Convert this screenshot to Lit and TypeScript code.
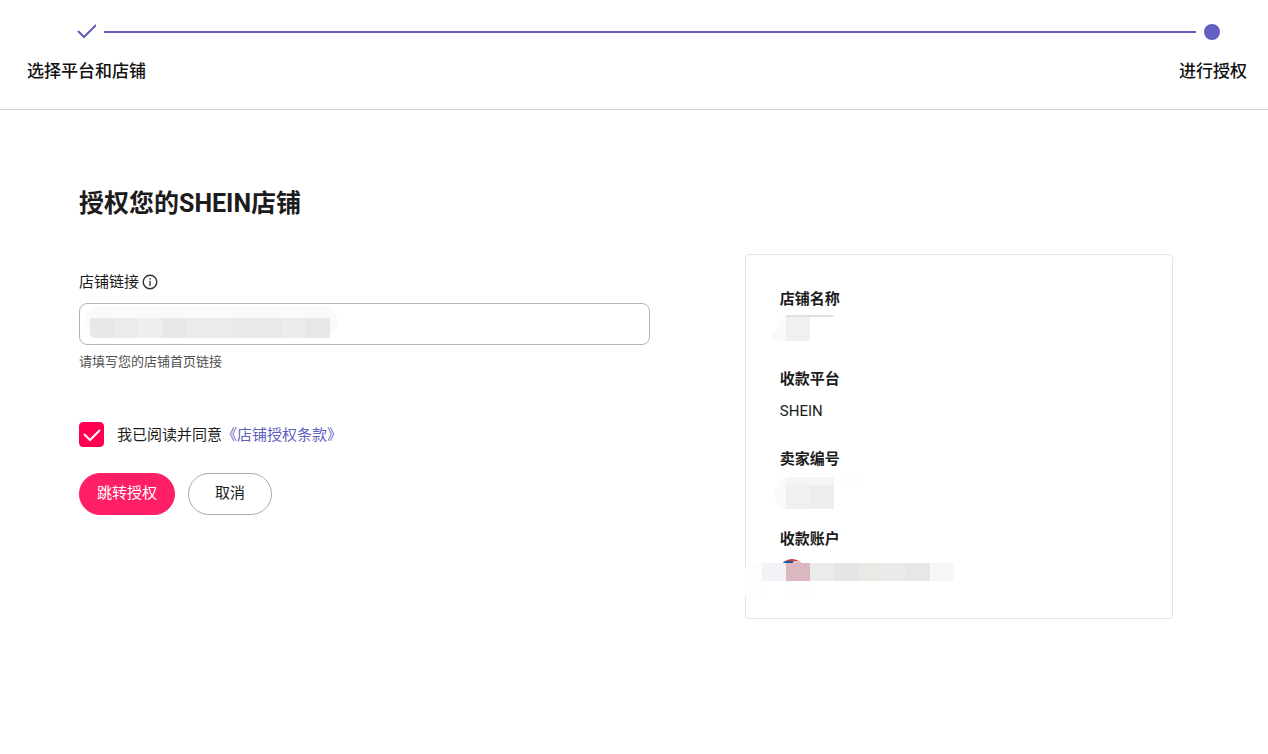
import { LitElement, html, svg, css, nothing } from "lit";
import { customElement, state } from "lit/decorators.js";

interface Block {
  x: number;
  y: number;
  w: number;
  h: number;
  fill: string;
}

const block = (x: number, y: number, w: number, h: number, fill: string): Block => ({ x, y, w, h, fill });
const rects = (blocks: Block[]) =>
  blocks.map((b) => svg`<rect x=${b.x} y=${b.y} width=${b.w} height=${b.h} fill=${b.fill}></rect>`);

const shopLinkMask = svg`
  <rect x="5" y="3" width="254" height="32" rx="16" fill="#fafafa"></rect>
  <clipPath id="link-clip"><path d="M11 0H251V35H19Q11 35 11 31Z"></path></clipPath>
  <g clip-path="url(#link-clip)">
    ${rects([
      block(11, 15, 24, 20, "#e9e8e7"),
      block(35, 15, 24, 20, "#ebebeb"),
      block(59, 15, 24, 20, "#eeeeee"),
      block(83, 15, 24, 20, "#e7e7e7"),
      block(107, 15, 48, 20, "#ebebeb"),
      block(155, 15, 48, 20, "#e9e9e9"),
      block(203, 15, 24, 20, "#ececec"),
      block(227, 15, 24, 20, "#e7e7e7"),
    ])}
  </g>`;

const shopNameMask = svg`
  <path d="M20 -3Q7 0 6 12Q2 13 2 17Q2 21 7 21H12V22H30V-3Z" fill="#fafafa"></path>
  <rect x="16" y="-2" width="24" height="24" fill="#f0f0f0"></rect>
  <path d="M15 -2Q16 -4 18 -4H62Q64 -4 64 -2Z" fill="#dfe0df"></path>`;

const sellerMask = svg`
  <path d="M20 -2Q5 -1 5 14Q5 29 16 30H20Z" fill="#fafafa"></path>
  ${rects([
    block(16, -2, 48, 8, "#f5f5f5"),
    block(64, -2, 24, 8, "#fdfdfd"),
    block(16, 6, 24, 24, "#f0f0f0"),
    block(40, 6, 24, 24, "#ededed"),
  ])}`;

const accountMask = svg`
  <path d="M-26 14Q-25 4 -8 4V41Q-26 41 -26 33Z" fill="#fdfdfd"></path>
  <clipPath id="flag-clip"><circle cx="22" cy="12" r="12"></circle></clipPath>
  <g clip-path="url(#flag-clip)">
    <rect x="10" y="0" width="24" height="4" fill="#d23a43"></rect>
    <rect x="10" y="2" width="13" height="3" fill="#1b57a5"></rect>
    <rect x="23" y="2" width="12" height="3" fill="#efb9bd"></rect>
  </g>
  ${rects([
    block(-8, 4, 24, 18, "#f4f2f7"),
    block(16, 4, 24, 18, "#dbb7bf"),
    block(40, 4, 24, 18, "#ebebeb"),
    block(64, 4, 24, 18, "#e5e5e5"),
    block(88, 4, 24, 18, "#e9e9e6"),
    block(112, 4, 24, 18, "#e9ebea"),
    block(136, 4, 24, 18, "#e7e7e7"),
    block(160, 4, 24, 18, "#f7f7f7"),
    block(16, 22, 24, 19, "#fdfdfd"),
  ])}`;

@customElement("app-root")
export class AppRoot extends LitElement {
  @state() private agreed = true;

  static styles = css`
    :host {
      display: block;
      min-height: 100vh;
      background: #fff;
      color: #1c1c1c;
      font: 15px/24px Roboto, "Noto Sans CJK SC", sans-serif;
    }
    * { box-sizing: border-box; }
    .steps {
      padding: 20px 21px 24px 27px;
      border-bottom: 1px solid #d0d0d0;
    }
    .track {
      display: flex;
      align-items: center;
      gap: 8px;
      height: 24px;
      padding: 0 27px 0 49px;
    }
    .track svg { display: block; flex: none; }
    .line { flex: 1; height: 2px; background: #625fc1; }
    .dot { width: 16px; height: 16px; border-radius: 50%; background: #625fc1; }
    .names {
      display: flex;
      justify-content: space-between;
      margin: 14px 0 0;
      padding: 0;
      list-style: none;
      font-size: 17px;
      line-height: 27px;
      font-weight: 500;
      color: #111;
    }
    .content { padding: 76px 95px 40px 79px; }
    h1 {
      margin: 0;
      font-size: 25px;
      line-height: 36px;
      font-weight: 700;
    }
    .columns {
      display: grid;
      grid-template-columns: minmax(0, 4fr) minmax(0, 3fr);
      column-gap: 95px;
      align-items: start;
      margin-top: 32px;
    }
    .form { padding-top: 16px; }
    .label { display: flex; align-items: center; gap: 3px; }
    .label svg { display: block; }
    .field { position: relative; margin-top: 9px; }
    .field input {
      display: block;
      width: 100%;
      height: 42px;
      padding: 0 16px;
      border: 1px solid #b5b5b5;
      border-radius: 8px;
      background: #fff;
      font: inherit;
      color: inherit;
    }
    .mask {
      position: absolute;
      left: 0;
      top: 0;
      overflow: visible;
      pointer-events: none;
    }
    .hint {
      margin: 7px 0 0;
      font-size: 13px;
      line-height: 20px;
      color: #505050;
    }
    .agree {
      display: flex;
      align-items: center;
      margin-top: 50px;
    }
    .box { position: relative; width: 25px; height: 25px; margin-right: 13px; }
    .box input {
      display: block;
      appearance: none;
      width: 25px;
      height: 25px;
      margin: 0;
      border: 1px solid #ff0050;
      border-radius: 4px;
    }
    .box input:checked { background: #ff0050; }
    a { color: #625fc1; text-decoration: none; }
    .actions { display: flex; gap: 13px; margin-top: 26px; }
    button {
      height: 42px;
      padding: 0 17px 2px;
      border: 1px solid #ff1f66;
      border-radius: 21px;
      background: #ff1f66;
      color: #fff;
      font: inherit;
    }
    .plain {
      padding: 0 26px 2px;
      border-color: #ababab;
      background: #fff;
      color: #1c1c1c;
    }
    .card {
      display: grid;
      row-gap: 24px;
      margin: 0;
      padding: 32px 34px 35px;
      border: 1px solid #e4e4e4;
      border-radius: 4px;
    }
    dt { font-weight: 700; }
    dd { position: relative; min-height: 24px; margin: 8px 0 0; }
    .card .mask { left: -8px; }
  `;

  private item(name: string, value: unknown) {
    return html`<div><dt>${name}</dt><dd>${value}</dd></div>`;
  }

  private mask(shape: unknown) {
    return html`<svg class="mask" width="200" height="42" viewBox="2 0 200 42" aria-hidden="true">${shape}</svg>`;
  }

  render() {
    return html`
      <header class="steps">
        <div class="track">
          <svg width="20" height="16" viewBox="0 0 20 16" fill="none" stroke="#625fc1" stroke-width="2">
            <path d="M2 7L8 13L20 1"></path>
          </svg>
          <span class="line"></span>
          <span class="dot"></span>
        </div>
        <ol class="names">
          <li>选择平台和店铺</li>
          <li aria-current="step">进行授权</li>
        </ol>
      </header>
      <main class="content">
        <h1>授权您的SHEIN店铺</h1>
        <div class="columns">
          <form class="form" @submit=${(e: Event) => e.preventDefault()}>
            <label class="label" for="shop-link">
              店铺链接
              <svg width="16" height="16" viewBox="0 0 16 16" fill="none" stroke="#333">
                <circle cx="8" cy="8" r="6.8" stroke-width="1.4"></circle>
                <path d="M8 6.8V12M8 4V5.5" stroke-width="1.3"></path>
              </svg>
            </label>
            <div class="field">
              <input id="shop-link" type="text" aria-describedby="link-hint" />
              <svg class="mask" width="260" height="42" viewBox="0 0 260 42" aria-hidden="true">${shopLinkMask}</svg>
            </div>
            <p class="hint" id="link-hint">请填写您的店铺首页链接</p>
            <div class="agree">
              <span class="box">
                <input
                  id="agree"
                  type="checkbox"
                  .checked=${this.agreed}
                  @change=${(e: Event) => (this.agreed = (e.target as HTMLInputElement).checked)}
                />
                ${this.agreed
                  ? html`<svg class="mask" width="25" height="25" viewBox="0 0 25 25" fill="none" stroke="#fff" stroke-width="2">
                      <path d="M5 12L11 18L21 8"></path>
                    </svg>`
                  : nothing}
              </span>
              <label for="agree">我已阅读并同意</label><a href="#terms">《店铺授权条款》</a>
            </div>
            <div class="actions">
              <button type="submit">跳转授权</button>
              <button class="plain" type="button">取消</button>
            </div>
          </form>
          <dl class="card">
            ${this.item("店铺名称", this.mask(shopNameMask))}
            ${this.item("收款平台", "SHEIN")}
            ${this.item("卖家编号", this.mask(sellerMask))}
            ${this.item("收款账户", this.mask(accountMask))}
          </dl>
        </div>
      </main>
    `;
  }
}
